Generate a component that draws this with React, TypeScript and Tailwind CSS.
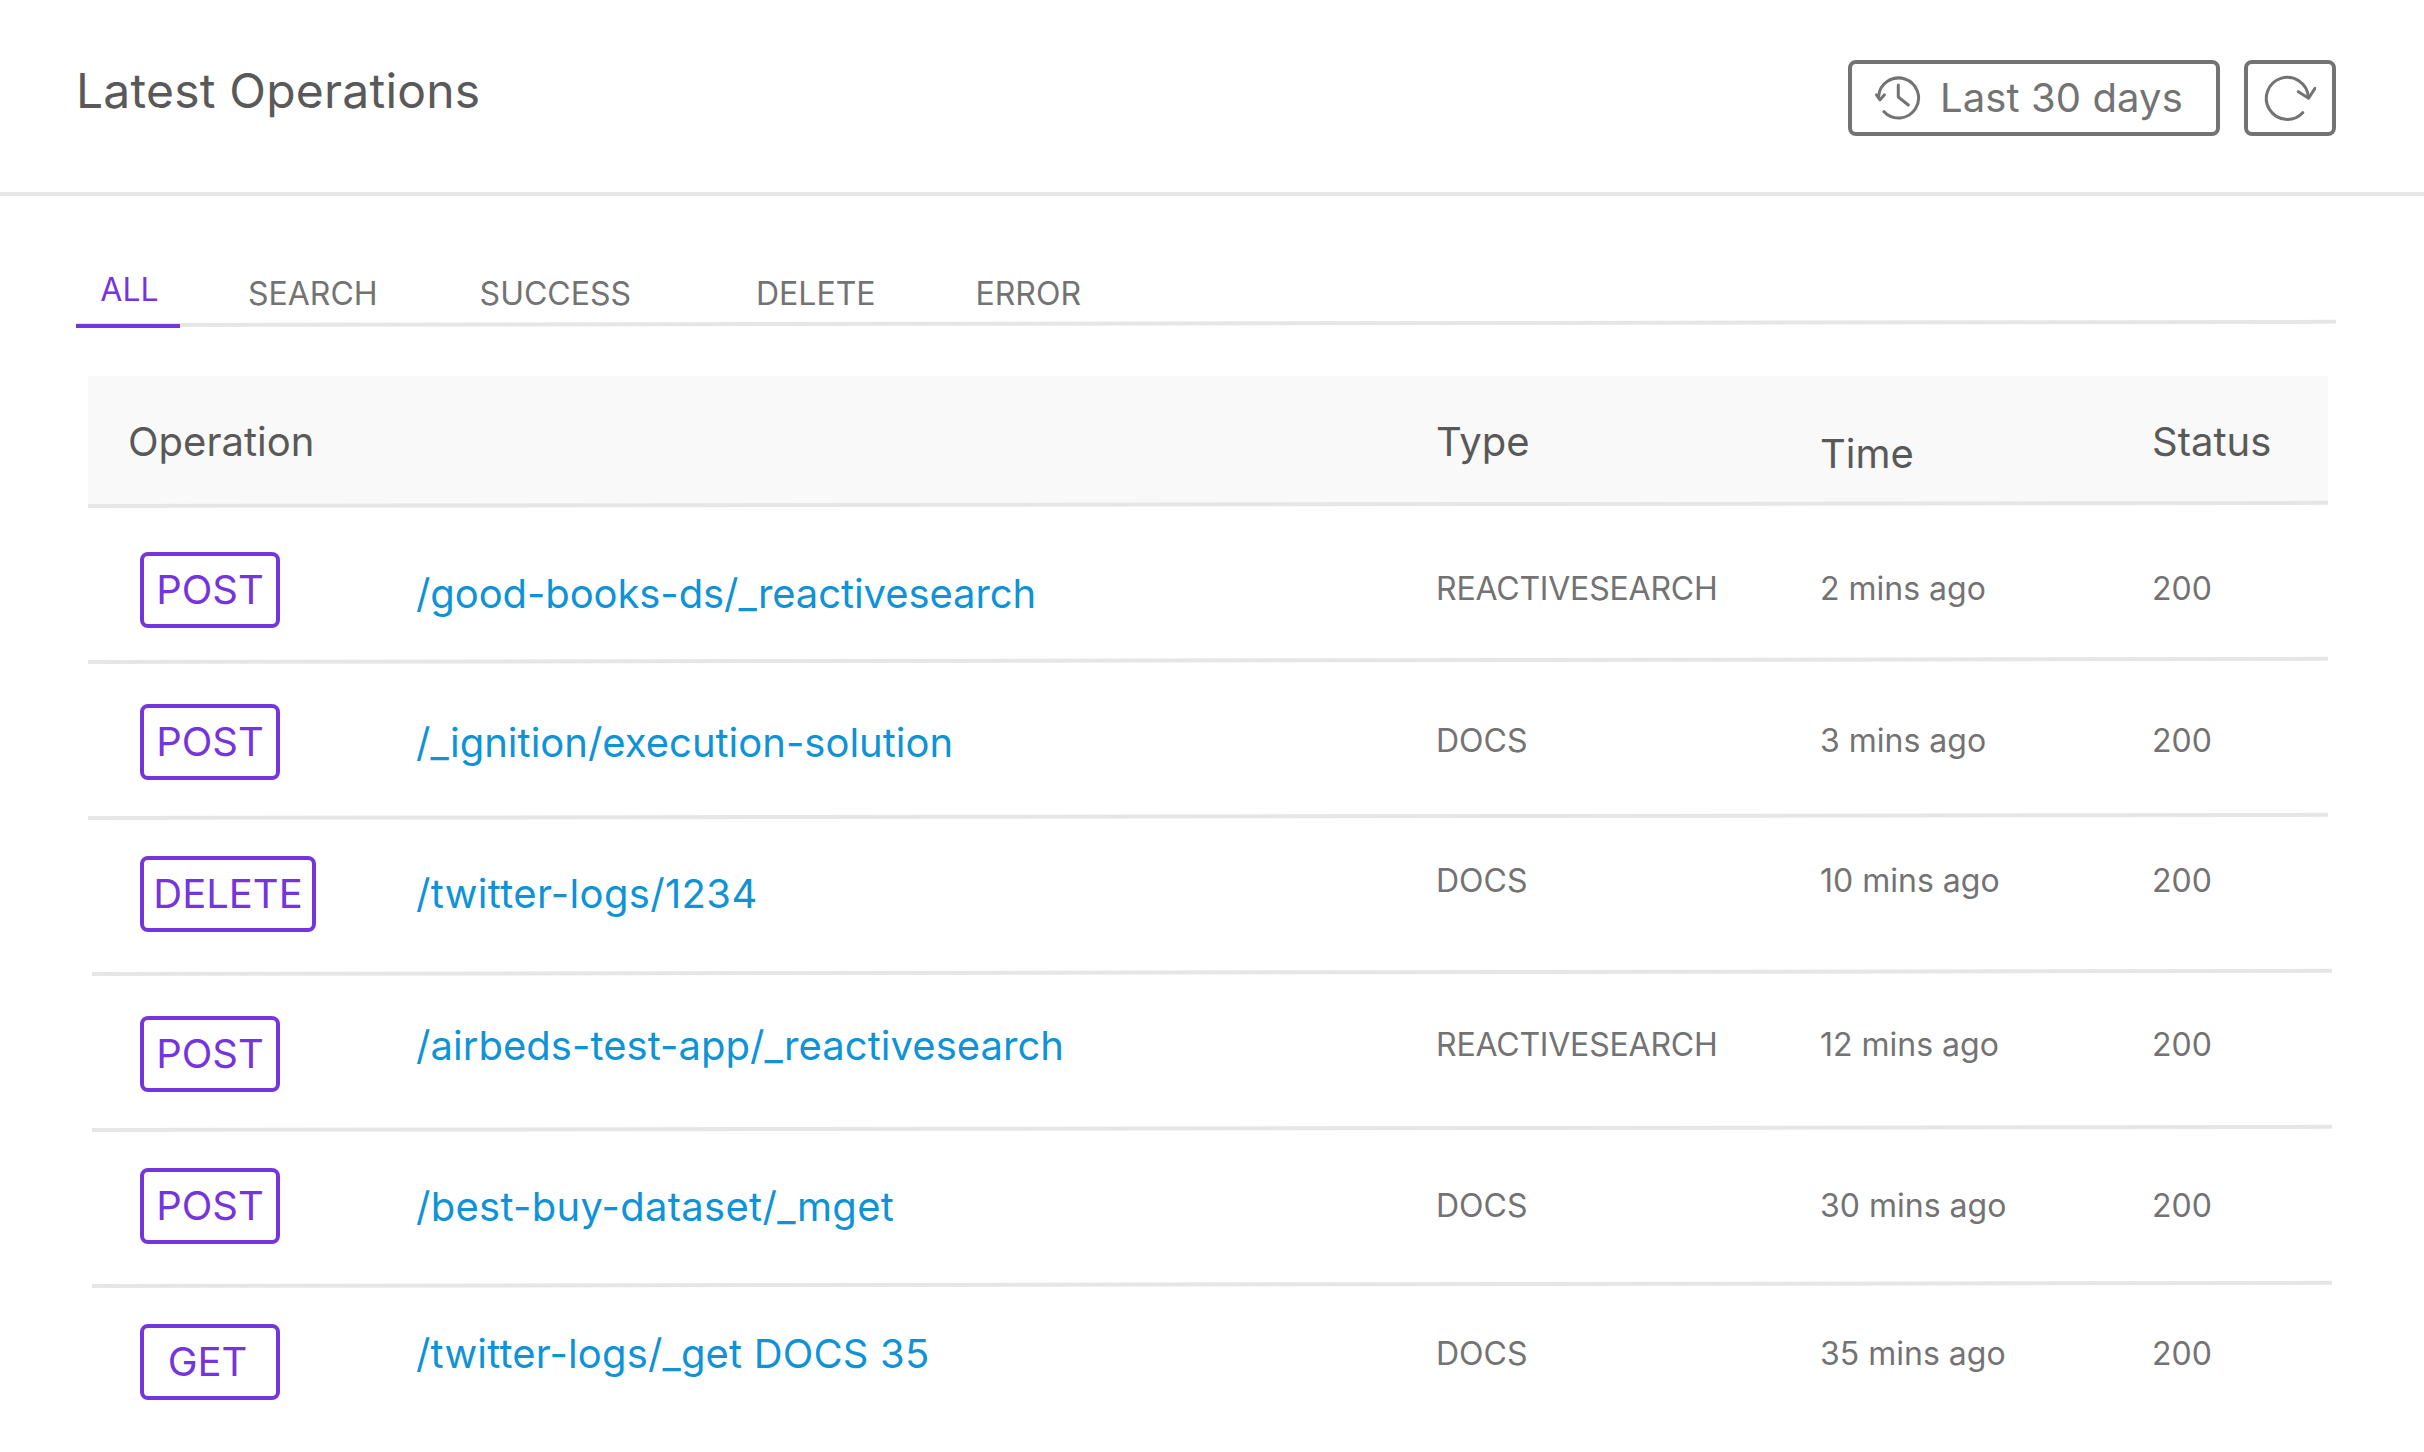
import React from 'react'

const rows = [
  { method: 'POST', path: '/good-books-ds/_reactivesearch', type: 'REACTIVESEARCH', time: '2 mins ago', badgeTop: 'pt-[44px]', linkTop: 'pt-[62px] tracking-[-0.09px]', metaTop: 'pt-[61px]', rule: 'w-[2240px]', badge: 'w-[140px]', typeFit: 'tracking-[-0.2px]' },
  { method: 'POST', path: '/_ignition/execution-solution', type: 'DOCS', time: '3 mins ago', badgeTop: 'pt-[40px]', linkTop: 'pt-[55px]', metaTop: 'pt-[57px]', rule: 'w-[2240px]', badge: 'w-[140px]', typeFit: '' },
  { method: 'DELETE', path: '/twitter-logs/1234', type: 'DOCS', time: '10 mins ago', badgeTop: 'pt-[36px]', linkTop: 'pt-[50px] tracking-[0.34px]', metaTop: 'pt-[41px]', rule: 'w-[2240px] ml-[4px]', badge: 'w-[176px]', typeFit: '' },
  { method: 'POST', path: '/airbeds-test-app/_reactivesearch', type: 'REACTIVESEARCH', time: '12 mins ago', badgeTop: 'pt-[40px]', linkTop: 'pt-[46px] tracking-[0.04px]', metaTop: 'pt-[49px]', rule: 'w-[2240px] ml-[4px]', badge: 'w-[140px]', typeFit: 'tracking-[-0.2px]' },
  { method: 'POST', path: '/best-buy-dataset/_mget', type: 'DOCS', time: '30 mins ago', badgeTop: 'pt-[36px]', linkTop: 'pt-[51px] tracking-[0.28px]', metaTop: 'pt-[54px]', rule: 'w-[2240px] ml-[4px]', badge: 'w-[140px]', typeFit: '' },
  { method: 'GET', path: '/twitter-logs/_get DOCS 35', type: 'DOCS', time: '35 mins ago', badgeTop: 'pt-[36px]', linkTop: 'pt-[42px] tracking-[0.16px]', metaTop: 'pt-[46px]', rule: '', badge: 'w-[140px] pr-[5px]', typeFit: '' }
]

const columns = 'grid grid-cols-[328px_1020px_384px_332px_176px]'

const HistoryIcon = () => (
  <svg width="48" height="48" viewBox="0 0 48 48" fill="none" stroke="#737373" strokeWidth="3" strokeLinecap="round" strokeLinejoin="round">
    <path d="M4.6 22.5A20 20 0 1 1 10 37.7" />
    <path d="M2.5 20.8 6 25.8l4.5-5" />
    <path d="M24.3 11v12l10 8" />
  </svg>
)

const RefreshIcon = () => (
  <svg width="52" height="48" viewBox="0 0 52 48" fill="none" stroke="#737373" strokeWidth="3" strokeLinecap="round" strokeLinejoin="round">
    <path d="M38.7 38.7A21 21 0 1 1 44.3 23" />
    <path d="M34.3 17.7 44.6 24.3 51 14.3" />
  </svg>
)

const App = () => {
  return (
    <div className="w-full h-[1452px] overflow-hidden bg-white font-['Inter',sans-serif] font-[375]">
      {/* Header */}
      <div className="h-[196px] flex justify-between pl-[76px] pr-[88px] border-b-4 border-[#e6e6e6]">
        <h1 className="mt-[63px] h-[56px] text-[48px] leading-[56px] font-[375] tracking-[0.21px] text-[#595959]">Latest Operations</h1>
        <div className="mt-[60px] flex gap-[24px] h-[76px]">
          <button className="w-[372px] flex items-center pl-[22px] gap-[18px] border-4 border-[#737373] rounded-[8px] text-[40px] leading-[48px] tracking-[0.1px] text-[#737373]">
            <HistoryIcon />
            <span>Last 30 days</span>
          </button>
          <button className="w-[92px] flex items-center justify-center border-4 border-[#737373] rounded-[8px]">
            <RefreshIcon />
          </button>
        </div>
      </div>

      {/* Tabs */}
      <div className="ml-[76px] mr-[88px] h-[127px] flex items-end text-[32px] leading-[40px] text-[#737373]">
        <div className="relative z-10 w-[104px] -mb-[5px] pb-[14px] pl-[3px] text-center border-b-4 border-[#7535dc] text-[#7535dc]">ALL</div>
        <div className="ml-[68px] pb-[9px]">SEARCH</div>
        <div className="ml-[102px] pb-[9px]">SUCCESS</div>
        <div className="ml-[125px] pb-[9px]">DELETE</div>
        <div className="ml-[100px] pb-[9px]">ERROR</div>
      </div>
      <div className="ml-[76px] w-[2260px] h-[4px] bg-[#e6e6e6] origin-left rotate-[-0.08deg]" />

      {/* Table */}
      <div className="mt-[49px] ml-[88px] w-[2244px]">
        <div className={`${columns} w-[2240px] h-[128px] bg-[#f9f9f9] text-[40px] leading-[48px] text-[#595959]`}>
          <div className="col-span-2 pl-[40px] pt-[42px]">Operation</div>
          <div className="pt-[42px]">Type</div>
          <div className="pt-[54px]">Time</div>
          <div className="pt-[42px]">Status</div>
        </div>
        <div className="w-[2240px] h-[4px] bg-[#e6e6e6] origin-left rotate-[-0.08deg]" />
        {rows.map((row, index) => (
          <div key={index}>
            <div className={`${columns} h-[152px]`}>
              <div className={`pl-[52px] ${row.badgeTop}`}>
                <div className={`${row.badge} h-[76px] flex items-center justify-center border-4 border-[#7535dc] rounded-[8px] text-[40px] leading-[48px] text-[#7535dc]`}>
                  {row.method}
                </div>
              </div>
              <div className={`${row.linkTop} text-[40px] leading-[48px] text-[#0f93d6]`}>{row.path}</div>
              <div className={`${row.metaTop} ${row.typeFit} text-[32px] leading-[40px] text-[#737373]`}>{row.type}</div>
              <div className={`${row.metaTop} text-[32px] leading-[40px] text-[#737373]`}>{row.time}</div>
              <div className={`${row.metaTop} text-[32px] leading-[40px] text-[#737373]`}>200</div>
            </div>
            {row.rule && <div className={`${row.rule} h-[4px] bg-[#e6e6e6] origin-left rotate-[-0.08deg]`} />}
          </div>
        ))}
      </div>
    </div>
  )
}

export default App
